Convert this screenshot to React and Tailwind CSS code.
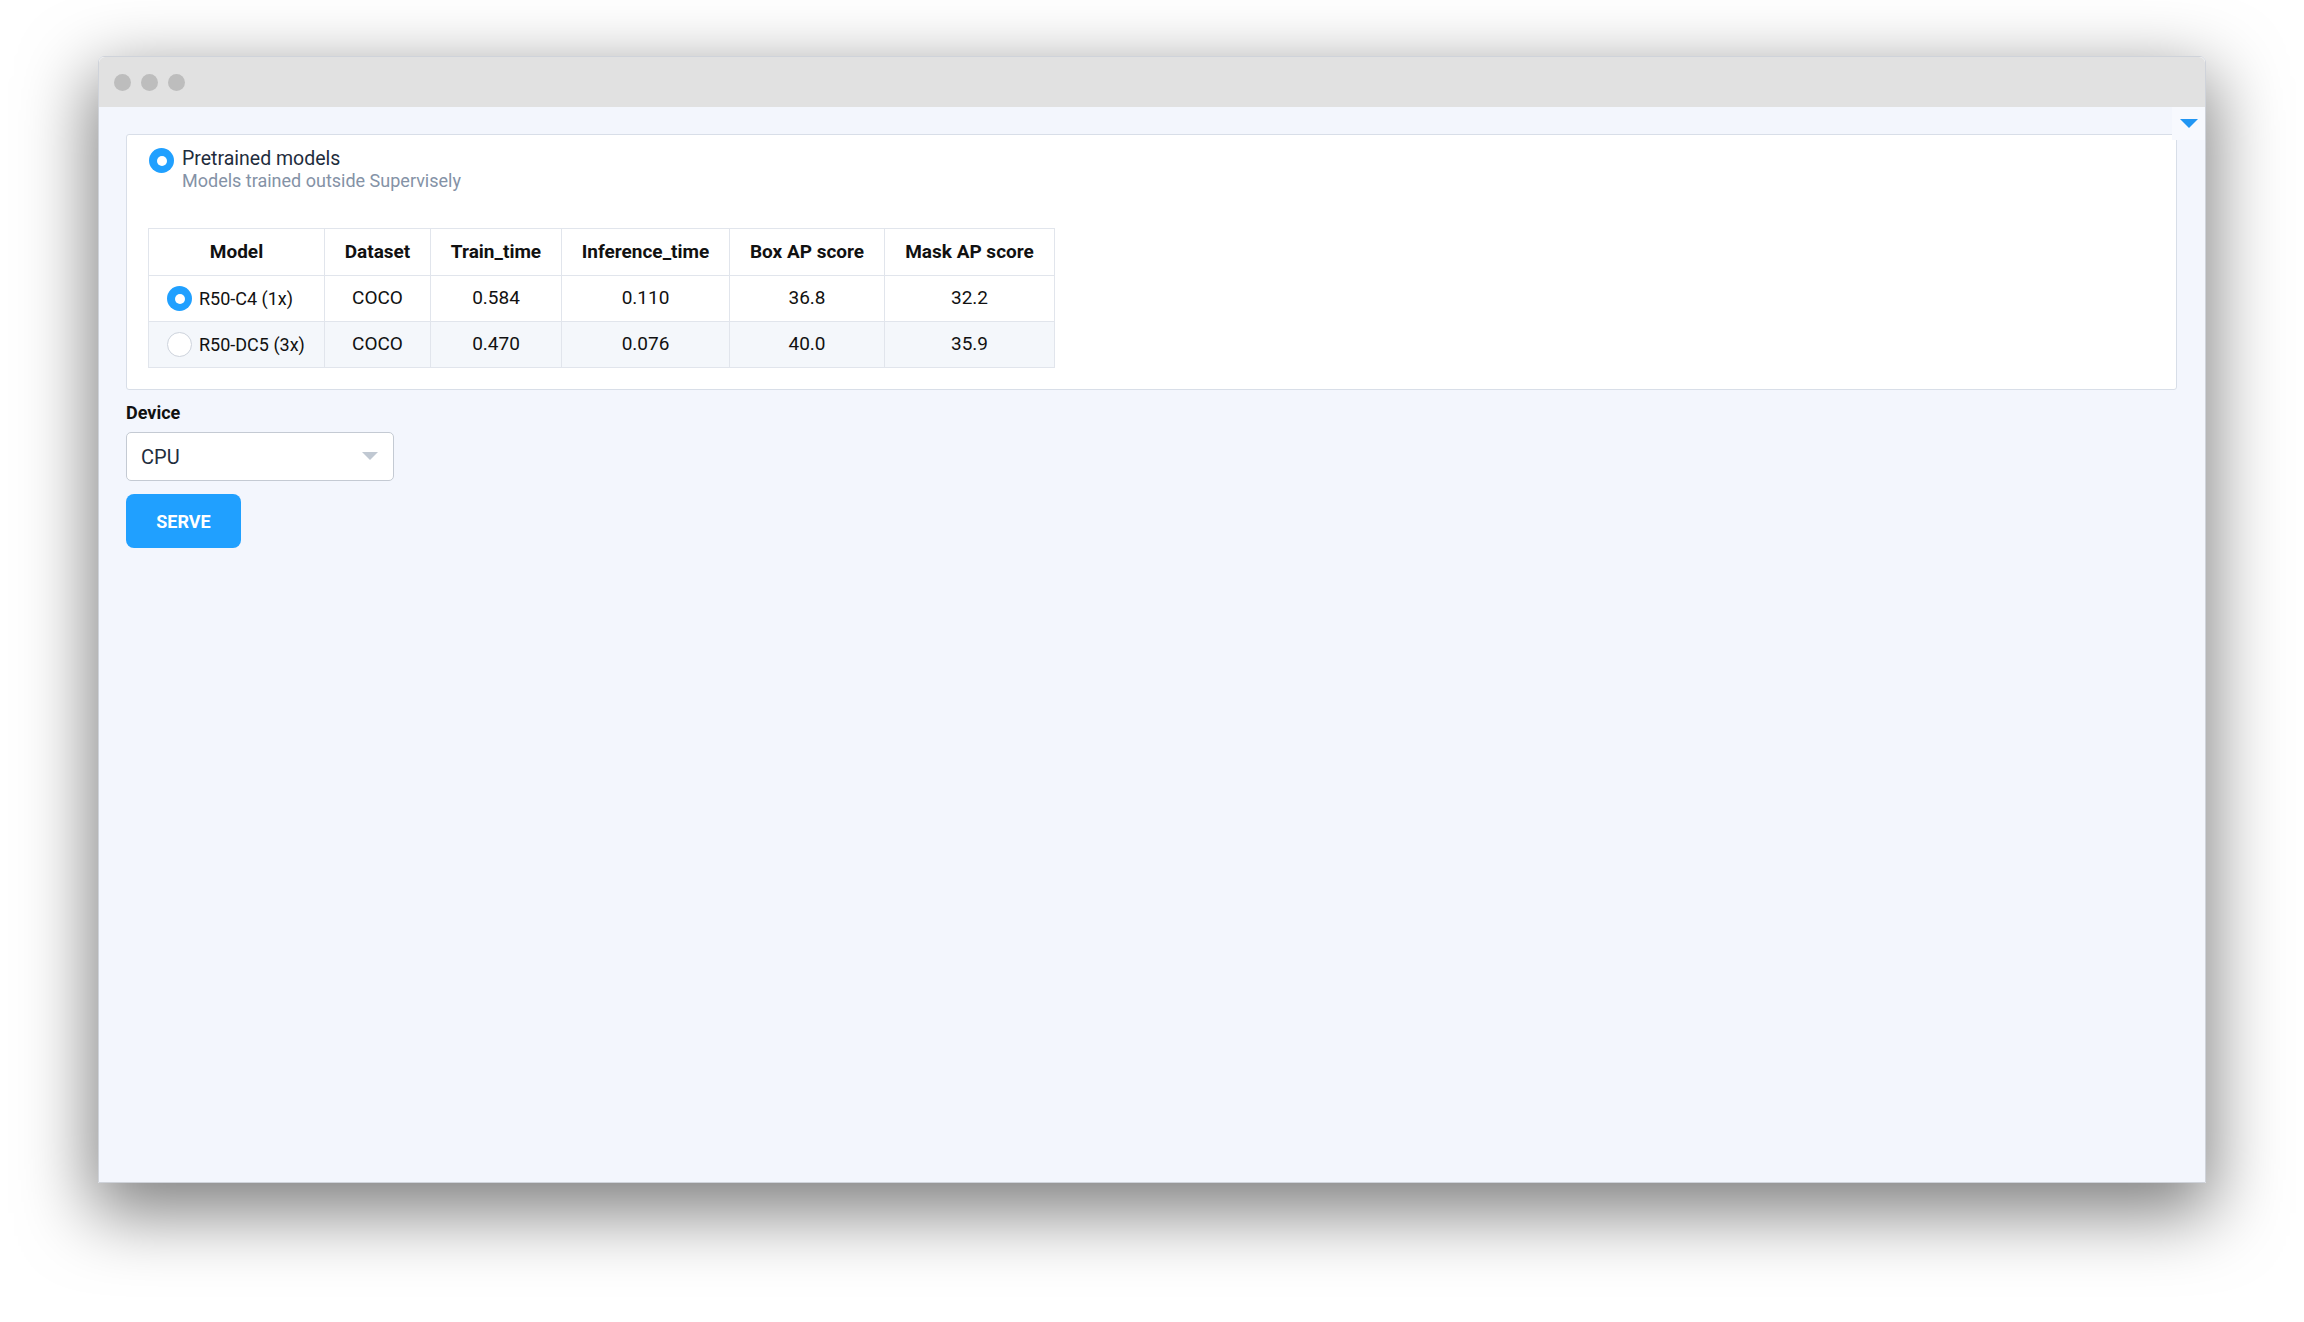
const rows = [
  { model: 'R50-C4 (1x)', dataset: 'COCO', train: '0.584', inf: '0.110', box: '36.8', mask: '32.2', checked: true },
  { model: 'R50-DC5 (3x)', dataset: 'COCO', train: '0.470', inf: '0.076', box: '40.0', mask: '35.9', checked: false },
]

function Radio({ checked }) {
  if (checked) {
    return (
      <span className="w-[25px] h-[25px] shrink-0 rounded-full bg-[#20a0ff] flex items-center justify-center">
        <span className="w-[10px] h-[10px] rounded-full bg-white" />
      </span>
    )
  }
  return <span className="w-[25px] h-[25px] shrink-0 rounded-full border border-[#cdd3dc] bg-white" />
}

export default function App() {
  return (
    <div
      className="min-h-[1322px] w-full bg-white pt-[56px] pl-[98px] overflow-hidden"
      style={{ fontFamily: 'Roboto, "Liberation Sans", sans-serif' }}
    >
      <div className="w-[2108px] h-[1127px] flex flex-col rounded-t-[6px] shadow-[0_24px_70px_6px_rgba(0,0,0,0.5)] border border-[#cfd3da]">
        {/* Title bar */}
        <div className="h-[50px] shrink-0 bg-[#e1e1e1] rounded-t-[6px] flex items-center gap-[10px] pl-[15px]">
          <span className="w-[17px] h-[17px] rounded-full bg-[#bdbdbd]" />
          <span className="w-[17px] h-[17px] rounded-full bg-[#bdbdbd]" />
          <span className="w-[17px] h-[17px] rounded-full bg-[#bdbdbd]" />
        </div>

        {/* Content */}
        <div className="relative flex-1 bg-[#f3f6fd] pt-[27px] pl-[27px] pr-[28px]">
          <div className="absolute top-0 right-0 w-[33px] h-[33px] bg-[#f7f9fe] flex items-center justify-center">
            <svg width="18" height="10" viewBox="0 0 18 10">
              <path d="M0 0 H18 L9 9 Z" fill="#2196f3" />
            </svg>
          </div>

          {/* Card */}
          <div className="bg-white border border-[#d8dee8] rounded-[3px] pt-[12px] pl-[21px] pb-[21px]">
            <div className="flex items-start gap-[8px] pl-[1px]">
              <div className="pt-[1px]">
                <Radio checked />
              </div>
              <div className="flex flex-col">
                <span className="text-[19.5px] leading-[24px] text-[#1f2d3d]">Pretrained models</span>
                <span className="text-[18px] leading-[20px] text-[#8492a6]">Models trained outside Supervisely</span>
              </div>
            </div>

            <table className="mt-[37px] border-collapse text-[19px] text-[#111]">
              <thead>
                <tr className="h-[47px]">
                  <th className="w-[176px] border border-[#e1e5ec] font-bold">Model</th>
                  <th className="w-[106px] border border-[#e1e5ec] font-bold">Dataset</th>
                  <th className="w-[131px] border border-[#e1e5ec] font-bold">Train_time</th>
                  <th className="w-[168px] border border-[#e1e5ec] font-bold">Inference_time</th>
                  <th className="w-[155px] border border-[#e1e5ec] font-bold">Box AP score</th>
                  <th className="w-[170px] border border-[#e1e5ec] font-bold">Mask AP score</th>
                </tr>
              </thead>
              <tbody>
                {rows.map((r, i) => (
                  <tr key={r.model} className={`h-[46px] ${i % 2 ? 'bg-[#f4f7fb]' : 'bg-white'}`}>
                    <td className="border border-[#e1e5ec] pl-[18px]">
                      <div className="flex items-center gap-[7px] text-[18px]">
                        <Radio checked={r.checked} />
                        {r.model}
                      </div>
                    </td>
                    <td className="border border-[#e1e5ec] text-center">{r.dataset}</td>
                    <td className="border border-[#e1e5ec] text-center">{r.train}</td>
                    <td className="border border-[#e1e5ec] text-center">{r.inf}</td>
                    <td className="border border-[#e1e5ec] text-center">{r.box}</td>
                    <td className="border border-[#e1e5ec] text-center">{r.mask}</td>
                  </tr>
                ))}
              </tbody>
            </table>
          </div>

          {/* Device */}
          <div className="pt-[11px]">
            <div className="text-[18px] leading-[24px] font-bold text-[#111]">Device</div>
            <div className="mt-[7px] w-[268px] h-[49px] bg-white border border-[#c4cad3] rounded-[5px] flex items-center justify-between pl-[14px] pr-[15px]">
              <span className="text-[20px] text-[#1f2d3d]">CPU</span>
              <svg width="16" height="9" viewBox="0 0 16 9">
                <path d="M0 0 H16 L8 8 Z" fill="#c0c8d2" />
              </svg>
            </div>
            <button className="mt-[13px] w-[115px] h-[54px] rounded-[8px] bg-[#20a0ff] text-white text-[18px] font-bold">
              SERVE
            </button>
          </div>
        </div>
      </div>
    </div>
  )
}
